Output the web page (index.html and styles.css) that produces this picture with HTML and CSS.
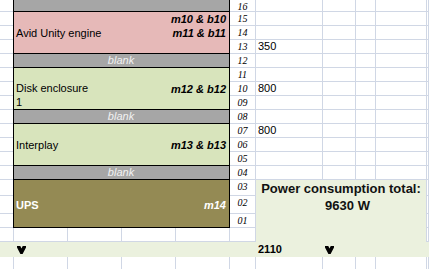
FILE: index.html
```html
<!DOCTYPE html>
<html>
<head>
<meta charset="utf-8">
<link rel="stylesheet" href="styles.css">
</head>
<body>
<div class="sheet">
  <div class="blk gray b16"></div>
  <div class="blk pink avid">
    <div class="name mid">Avid Unity engine</div>
    <div class="tag r1">m10 &amp; b10</div>
    <div class="tag r2">m11 &amp; b11</div>
  </div>
  <div class="blk gray blank bl12">blank</div>
  <div class="blk green disk">
    <div class="name end">Disk enclosure<br>1</div>
    <div class="tag r2">m12 &amp; b12</div>
  </div>
  <div class="blk gray blank bl08">blank</div>
  <div class="blk green inter">
    <div class="name mid">Interplay</div>
    <div class="tag r2">m13 &amp; b13</div>
  </div>
  <div class="blk gray blank bl04">blank</div>
  <div class="blk olive ups">
    <div class="name row2">UPS</div>
    <div class="tag r2">m14</div>
  </div>
  <div class="power">
    <div>Power consumption total:</div>
    <div class="watt">9630 W</div>
  </div>
  <div class="band">
    <span class="mark m1"><svg width="9" height="8" viewBox="0 0 9 8"><polygon points="0,0 3.3,0 4.5,2.5 5.7,0 9,0 9,1.5 5.6,8 3.4,8 0,1.5" fill="#000"/></svg></span>
    <span class="total">2110</span>
    <span class="mark m2"><svg width="9" height="8" viewBox="0 0 9 8"><polygon points="0,0 3.3,0 4.5,2.5 5.7,0 9,0 9,1.5 5.6,8 3.4,8 0,1.5" fill="#000"/></svg></span>
  </div>

  <!-- row 16 -->
  <div class="m"></div><div class="c lbl">16</div><div class="c"></div><div class="c"></div><div class="c"></div><div class="c"></div><div class="c"></div>
  <!-- row 15 -->
  <div class="m"></div><div class="c lbl">15</div><div class="c"></div><div class="c"></div><div class="c"></div><div class="c"></div><div class="c"></div>
  <!-- row 14 -->
  <div class="m"></div><div class="c lbl">14</div><div class="c"></div><div class="c"></div><div class="c"></div><div class="c"></div><div class="c"></div>
  <!-- row 13 -->
  <div class="m"></div><div class="c lbl">13</div><div class="c num">350</div><div class="c"></div><div class="c"></div><div class="c"></div><div class="c"></div>
  <!-- row 12 -->
  <div class="m"></div><div class="c lbl">12</div><div class="c"></div><div class="c"></div><div class="c"></div><div class="c"></div><div class="c"></div>
  <!-- row 11 -->
  <div class="m"></div><div class="c lbl">11</div><div class="c"></div><div class="c"></div><div class="c"></div><div class="c"></div><div class="c"></div>
  <!-- row 10 -->
  <div class="m"></div><div class="c lbl">10</div><div class="c num">800</div><div class="c"></div><div class="c"></div><div class="c"></div><div class="c"></div>
  <!-- row 09 -->
  <div class="m"></div><div class="c lbl">09</div><div class="c"></div><div class="c"></div><div class="c"></div><div class="c"></div><div class="c"></div>
  <!-- row 08 -->
  <div class="m"></div><div class="c lbl">08</div><div class="c"></div><div class="c"></div><div class="c"></div><div class="c"></div><div class="c"></div>
  <!-- row 07 -->
  <div class="m"></div><div class="c lbl">07</div><div class="c num">800</div><div class="c"></div><div class="c"></div><div class="c"></div><div class="c"></div>
  <!-- row 06 -->
  <div class="m"></div><div class="c lbl">06</div><div class="c"></div><div class="c"></div><div class="c"></div><div class="c"></div><div class="c"></div>
  <!-- row 05 -->
  <div class="m"></div><div class="c lbl">05</div><div class="c"></div><div class="c"></div><div class="c"></div><div class="c"></div><div class="c"></div>
  <!-- row 04 -->
  <div class="m"></div><div class="c lbl">04</div><div class="c"></div><div class="c"></div><div class="c"></div><div class="c"></div><div class="c"></div>
  <!-- row 03 -->
  <div class="m"></div><div class="c lbl">03</div><div class="c"></div>
  <!-- row 02 -->
  <div class="m"></div><div class="c lbl">02</div><div class="c"></div>
  <!-- row 01 -->
  <div class="m"></div><div class="c lbl">01</div><div class="c"></div>
  <!-- empty row -->
  <div class="m"></div><div class="c bl"></div><div class="c"></div><div class="c"></div><div class="c"></div><div class="c"></div><div class="c"></div>
  <!-- last row -->
  <div class="m"></div><div class="c bl"></div><div class="c"></div><div class="c"></div><div class="c"></div><div class="c"></div><div class="c"></div><div class="c"></div><div class="c"></div><div class="c"></div><div class="c"></div>
</div>
</body>
</html>
```
FILE: styles.css
```css
html, body {
  margin: 0;
  padding: 0;
  background: #fff;
  overflow: hidden;
}
body {
  font-family: "Liberation Sans", Arial, sans-serif;
  font-size: 11px;
  color: #000;
}
.sheet {
  display: grid;
  grid-template-columns: 13px 55px 54px 54px 54px 26px 67px 33px 20px 51px 1fr;
  grid-template-rows: 12px repeat(12, 14px) 16px 18px 14px 14px 15px 14px;
  width: 429px;
  height: 269px;
  overflow: hidden;
}
.sheet > div {
  box-sizing: border-box;
  min-width: 0;
}
.c {
  border-right: 1px solid #d0d7e5;
  border-bottom: 1px solid #d0d7e5;
}
.m {
  border-bottom: 1px solid #d0d7e5;
}
.bl {
  border-left: 1px solid #d0d7e5;
}
.lbl {
  font: italic 10px "Liberation Serif", "Times New Roman", serif;
  text-align: center;
  line-height: 13px;
}
.num {
  padding-left: 2px;
  line-height: 13px;
}

/* colored merged blocks */
.blk {
  grid-column: 2 / 6;
  border: 1px solid #000;
  border-top: 0;
  padding: 0 3px 0 2px;
  display: grid;
  grid-template-columns: 1fr auto;
  grid-template-rows: 14px 14px 1fr;
  line-height: 14px;
}
.gray { background: #a6a6a6; }
.pink { background: #e6b9b8; }
.green { background: #d8e4bc; }
.olive { background: #948a54; color: #fff; }

.b16 { grid-row: 1; }
.avid { grid-row: 2 / 5; }
.bl12 { grid-row: 5; }
.disk { grid-row: 6 / 9; }
.bl08 { grid-row: 9; }
.inter { grid-row: 10 / 13; }
.bl04 { grid-row: 13; }
.ups { grid-row: 14 / 17; grid-template-rows: 16px 17px 1fr; }

.blank {
  display: flex;
  align-items: center;
  justify-content: center;
  font-style: italic;
  color: #f2f2f2;
  line-height: 13px;
}
.name {
  grid-column: 1;
}
.name.mid { grid-row: 1 / -1; align-self: center; }
.name.end { grid-row: 1 / -1; align-self: end; }
.name.row2 { grid-row: 2; align-self: center; font-weight: bold; }
.tag {
  grid-column: 2;
  font-weight: bold;
  font-style: italic;
  text-align: right;
  align-self: center;
}
.tag.r1 { grid-row: 1; }
.tag.r2 { grid-row: 2; }

/* power consumption box */
.power {
  grid-row: 14 / 18;
  grid-column: 7 / 11;
  background: #ebf1de;
  border-right: 1px solid #d0d7e5;
  text-align: center;
  font-weight: bold;
  font-size: 13px;
  line-height: 17px;
  color: #111;
}
.watt {
  padding-left: 13px;
}

/* total band */
.band {
  grid-row: 18;
  grid-column: 1 / -1;
  background: #ebf1de;
  display: grid;
  grid-template-columns: 13px 55px 54px 54px 54px 26px 67px 33px 20px 51px 1fr;
  align-items: center;
  line-height: 15px;
}
.mark {
  display: flex;
  align-items: center;
}
.mark.m1 { grid-column: 2; padding-left: 4px; }
.mark.m2 { grid-column: 8; padding-left: 2px; }
.total {
  grid-column: 7;
  padding-left: 2px;
  font-weight: bold;
}
```
